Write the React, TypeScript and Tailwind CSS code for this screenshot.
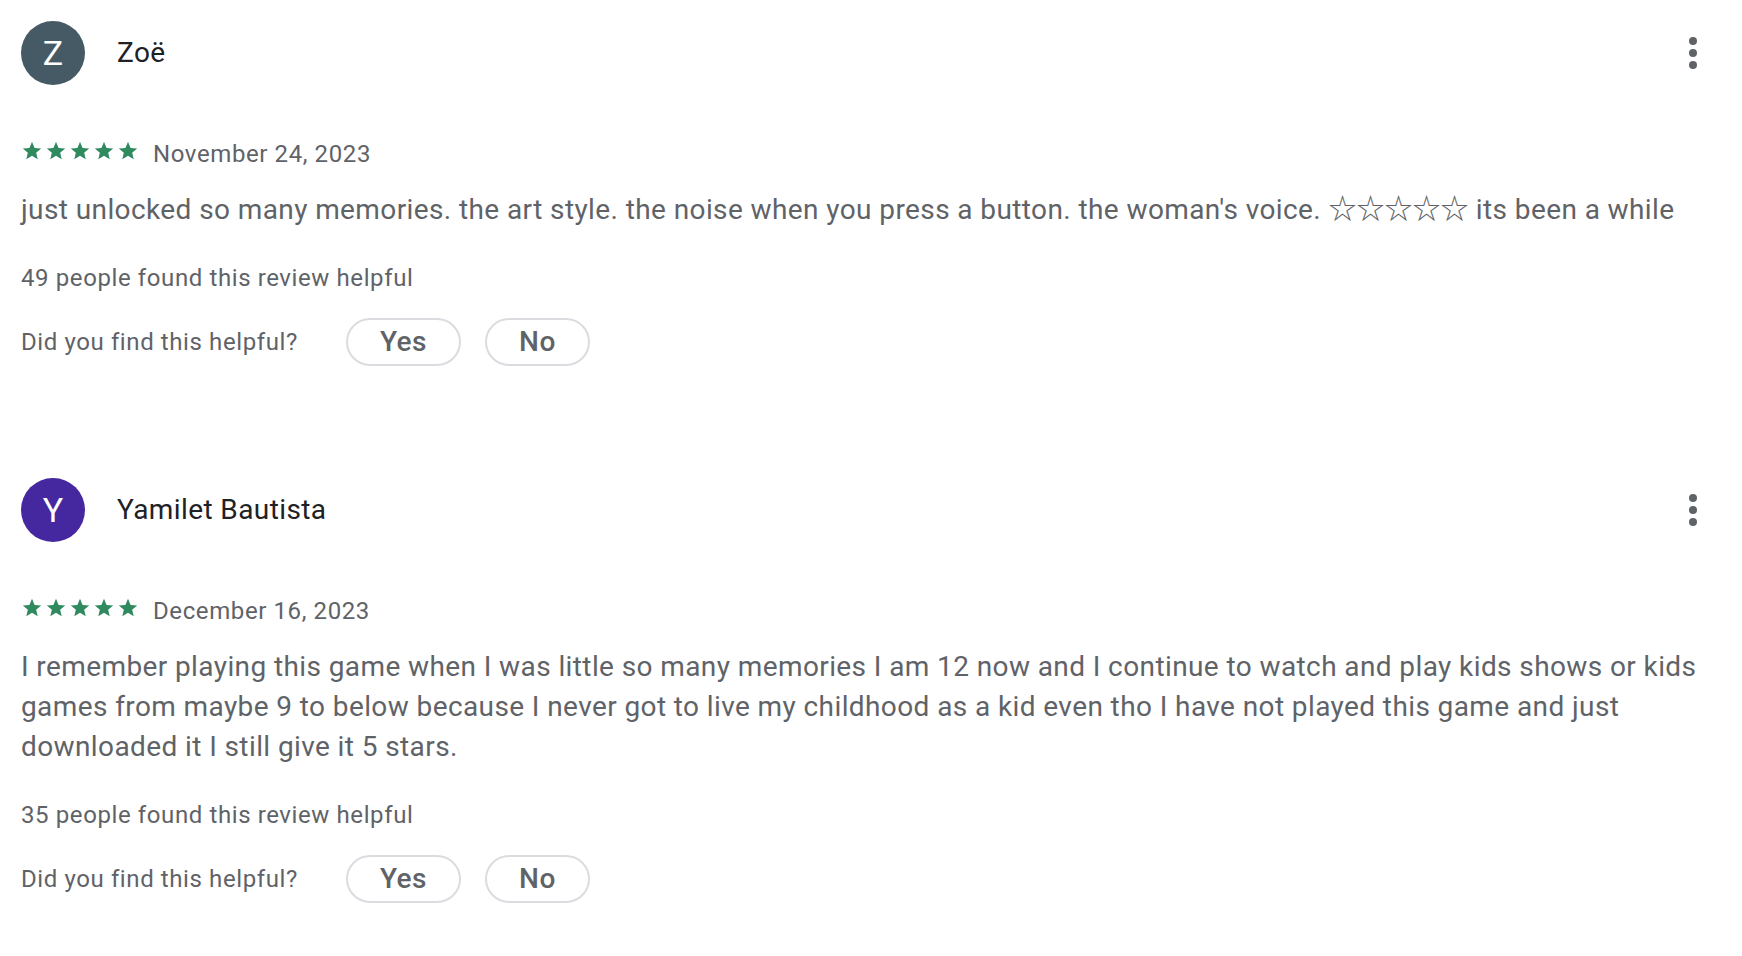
import React from "react";

type Review = {
  id: string;
  name: string;
  initial: string;
  avatarClass: string;
  date: string;
  text: React.ReactNode;
  helpfulCount: number;
};

const REVIEWS: Review[] = [
  {
    id: "r1",
    name: "Zoë",
    initial: "Z",
    avatarClass: "bg-[#455a64]",
    date: "November 24, 2023",
    text: (
      <>
        just unlocked so many memories. the art style. the noise when you press a button. the
        woman's voice.{" "}
        <span className="font-['Noto_Sans_CJK_JP',sans-serif] leading-none tracking-normal">
          ☆☆☆☆☆
        </span>{" "}
        its been a while
      </>
    ),
    helpfulCount: 49,
  },
  {
    id: "r2",
    name: "Yamilet Bautista",
    initial: "Y",
    avatarClass: "bg-[#4527a0]",
    date: "December 16, 2023",
    text: "I remember playing this game when I was little so many memories I am 12 now and I continue to watch and play kids shows or kids games from maybe 9 to below because I never got to live my childhood as a kid even tho I have not played this game and just downloaded it I still give it 5 stars.",
    helpfulCount: 35,
  },
];

function Star() {
  return (
    <svg width="22" height="22" viewBox="0 0 24 24" className="shrink-0 fill-[#2f8a5f]">
      <path d="M12 17.27 18.18 21l-1.64-7.03L22 9.24l-7.19-.61L12 2 9.19 8.63 2 9.24l5.46 4.73L5.82 21z" />
    </svg>
  );
}

function MoreVert() {
  return (
    <svg width="48" height="48" viewBox="0 0 48 48" className="fill-[#5f6368]">
      <circle cx="24" cy="12" r="4" />
      <circle cx="24" cy="24" r="4" />
      <circle cx="24" cy="36" r="4" />
    </svg>
  );
}

function ReviewCard({ review }: { review: Review }) {
  return (
    <div>
      <div className="flex h-16 items-center pr-[21px]">
        <div
          className={`flex h-16 w-16 shrink-0 items-center justify-center rounded-full text-[34px] leading-none text-white ${review.avatarClass}`}
        >
          {review.initial}
        </div>
        <span className="ml-[32px] text-[28px] leading-8 tracking-[0.4px] text-[#202124]">
          {review.name}
        </span>
        <button className="ml-auto flex h-12 w-12 items-center justify-center">
          <MoreVert />
        </button>
      </div>

      <div className="mt-[57px] flex h-6 items-center">
        <div className="mb-[6px] flex gap-[2px]">
          {[0, 1, 2, 3, 4].map((i) => (
            <Star key={i} />
          ))}
        </div>
        <span className="ml-[14px] text-[24px] leading-6 tracking-[0.6px] text-[#5f6368]">
          {review.date}
        </span>
      </div>

      <p className="mt-[24px] text-[28px] leading-10 tracking-[0.4px] text-[#5f6368]">
        {review.text}
      </p>

      <p className="mt-8 text-[24px] leading-8 tracking-[0.6px] text-[#5f6368]">
        {review.helpfulCount} people found this review helpful
      </p>

      <div className="mt-6 flex h-12 items-center">
        <span className="text-[24px] leading-8 tracking-[0.6px] text-[#5f6368]">
          Did you find this helpful?
        </span>
        <div className="ml-[48px] flex gap-6">
          <button className="h-12 rounded-full border-2 border-[#dadce0] px-8 text-[28px] font-medium leading-none tracking-[0.5px] text-[#5f6368]">
            Yes
          </button>
          <button className="h-12 rounded-full border-2 border-[#dadce0] px-8 text-[28px] font-medium leading-none tracking-[0.5px] text-[#5f6368]">
            No
          </button>
        </div>
      </div>
    </div>
  );
}

export default function App() {
  return (
    <div className="min-h-[956px] bg-white pl-[21px] pr-[4px] pt-[21px] font-['Roboto',sans-serif]">
      <div className="flex flex-col gap-[112px]">
        {REVIEWS.map((r) => (
          <ReviewCard key={r.id} review={r} />
        ))}
      </div>
    </div>
  );
}
